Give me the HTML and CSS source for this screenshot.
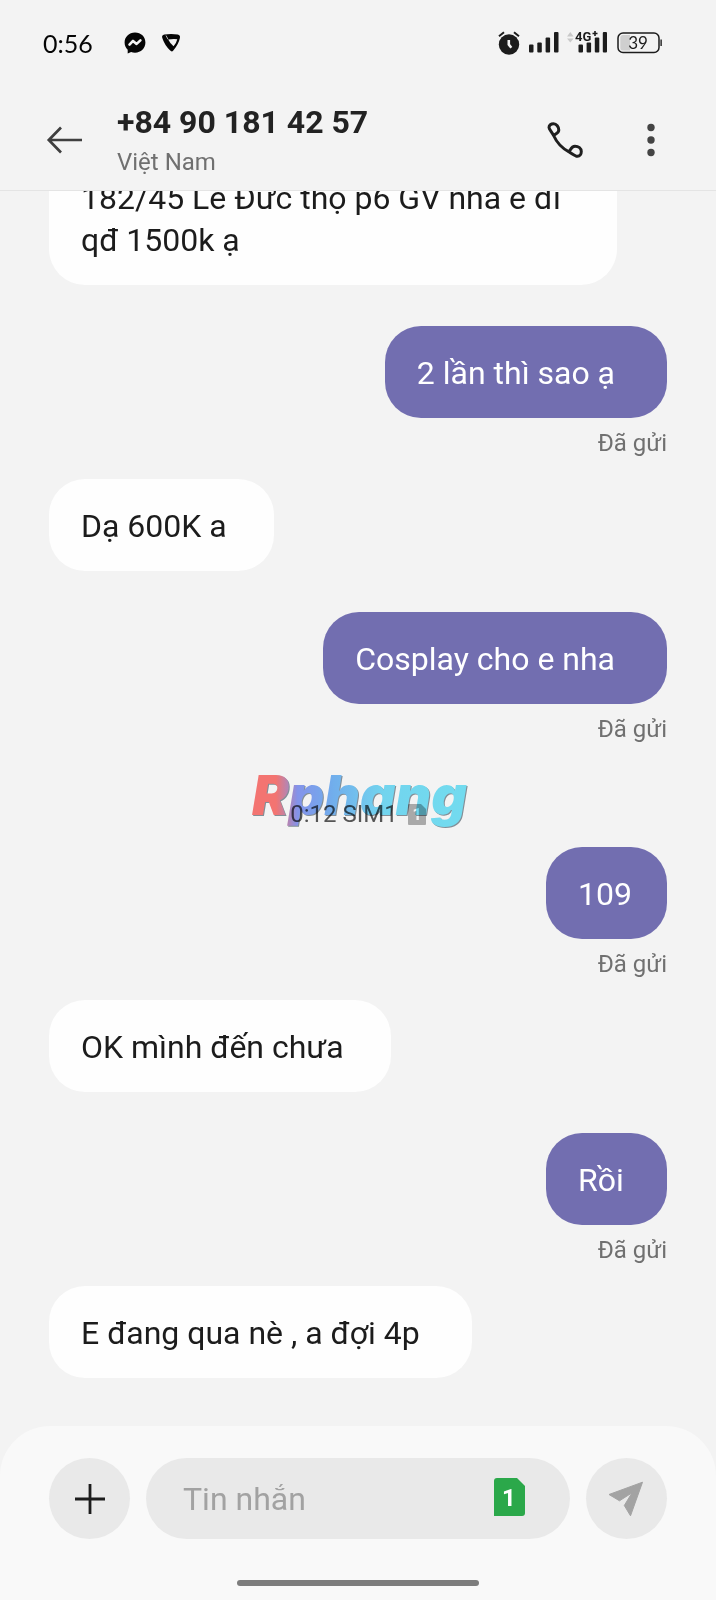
FILE: index.html
```html
<!DOCTYPE html>
<html lang="vi">
<head>
<meta charset="utf-8">
<meta name="viewport" content="width=device-width, initial-scale=1">
<title>Tin nhắn</title>
<link rel="stylesheet" href="styles.css">
</head>
<body>
<div class="phone">
  <div class="status">
    <span class="status-time">0:56</span>
    <svg class="messenger" width="22" height="22" viewBox="0 0 22 22" aria-hidden="true">
      <path fill="#050505" d="M11 .6C5 .6.6 5 .6 10.6c0 3 1.2 5.4 3.1 7.2v3.6l3.4-1.3c1.2.4 2.5.6 3.9.6 6 0 10.4-4.400 10.400-10.100S17 .6 11 .6z"/>
      <path fill="none" stroke="#f3f3f3" stroke-width="2.600" stroke-linejoin="round" stroke-linecap="round" d="M5.500 12.600l3.500-3.700 3.600 3 3.800-3.500"/>
    </svg>
    <svg class="shield" width="20" height="20" viewBox="0 0 20 20" aria-hidden="true">
      <path fill="#050505" d="M1.300 5Q.3 2 3.400 1.500 10 .4 16.700 1.500 19.600 2 18.900 5 17.500 11.500 12.300 17.500 10.800 19.200 9.200 17.600 3.500 12 1.300 5z"/>
      <path fill="#f3f3f3" d="M7.200 6.600Q12 5.800 16.300 6.300 15.400 10.300 12.500 13.200 9.200 10.700 7.200 6.600z"/>
      <path fill="none" stroke="#b5b5b5" stroke-width="1" d="M5 2.500l2 3.800"/>
    </svg>
    <svg class="alarm" width="22" height="24" viewBox="0 0 22 24" aria-hidden="true">
      <circle cx="11" cy="13.500" r="10.200" fill="#1c1c1c"/>
      <path fill="none" stroke="#1c1c1c" stroke-width="2" d="M1 5.300l5-4M21 5.300l-5-4"/>
      <path fill="none" stroke="#f3f3f3" stroke-width="2.600" d="M10.800 9v4.500l2.500 3.200"/>
    </svg>
    <svg class="signal" width="30" height="24" viewBox="0 0 30 24" aria-hidden="true">
      <g fill="#1c1c1c"><rect y="13.500" width="4.500" height="8" rx="1"/><rect x="8.300" y="11.500" width="4.500" height="10" rx="1"/><rect x="16.600" y="6.500" width="4.500" height="15" rx="1"/><rect x="25" y="1" width="4.500" height="20.500" rx="1"/></g>
    </svg>
    <svg class="network" width="40" height="24" viewBox="0 0 40 24" aria-hidden="true">
      <g fill="#c9c9c9"><path d="M0 5.500L3.300 1l3.300 4.500zM0 7.500L3.300 11.500l3.300-4z"/></g>
      <g fill="#1c1c1c"><rect x="11.500" y="13.500" width="4.500" height="8" rx="1"/><rect x="19.600" y="11.500" width="4.500" height="10" rx="1"/><rect x="27.800" y="6.500" width="4.500" height="15" rx="1"/><rect x="35.800" y="1" width="4.200" height="20.500" rx="1"/></g>
      <text class="network-label" x="8" y="10">4G</text>
      <path stroke="#1c1c1c" stroke-width="1.600" d="M25.500 2.500h5M28 0v5"/>
    </svg>
    <svg class="battery" width="46" height="22" viewBox="0 0 46 22" aria-hidden="true">
      <rect x="1" y="1" width="41" height="19.500" rx="5" fill="none" stroke="#1c1c1c" stroke-width="1.500"/>
      <path fill="#cfcfcf" d="M6 3h7v15.500H6Q3.300 18.500 3.300 16V5.500Q3.300 3 6 3z"/>
      <rect x="43.300" y="7.500" width="1.700" height="6.500" fill="#444"/>
      <text class="battery-label" x="21" y="17" text-anchor="middle">39</text>
    </svg>
  </div>

  <header class="appbar">
    <button class="icon-btn" type="button" aria-label="Quay lại">
      <svg width="36" height="28" viewBox="0 0 36 28"><path fill="none" stroke="#3f3f3f" stroke-width="2.700" d="M35 14H2M14 1.500L1.800 14 14 26.500"/></svg>
    </button>
    <div class="contact">
      <h1 class="contact-name">+84 90 181 42 57</h1>
      <p class="contact-place">Việt Nam</p>
    </div>
    <button class="icon-btn" type="button" aria-label="Gọi">
      <svg width="36" height="36" viewBox="0 0 36 36"><path fill="none" stroke="#1f1f1f" stroke-width="3" stroke-linejoin="round" d="M6.600 13.500C4.500 9.800 2 7 2 5.500 2 3.200 4 1.700 6.500 1.700 9.500 1.700 11.800 5 11.800 8c0 3-2.800 3.700-5.200 5.500C9.500 20 15.500 26.500 22 29.800 25 31.800 28.500 34.300 30.500 34.300 32.800 34.300 34.300 32 34.300 29.500 34.300 26.300 31.500 24.200 28 24.200 24.500 24.200 23.800 27.300 22 29.800"/></svg>
    </button>
    <button class="icon-btn more" type="button" aria-label="Thêm">
      <svg width="8" height="34" viewBox="0 0 8 34"><g fill="#444"><circle cx="4" cy="4.500" r="3.700"/><circle cx="4" cy="17" r="3.700"/><circle cx="4" cy="29.500" r="3.700"/></g></svg>
    </button>
  </header>

  <main class="thread">
    <p class="bubble in long">182/45 Lê Đức thọ p6 GV nhà e đi qđ 1500k ạ</p>
    <p class="bubble out spaced">2 lần thì sao ạ</p>
    <p class="sent">Đã gửi</p>
    <p class="bubble in">Dạ 600K a</p>
    <p class="bubble out spaced">Cosplay cho e nha</p>
    <p class="sent">Đã gửi</p>
    <div class="divider">
      <span>0:12 SIM1</span>
      <svg width="18" height="21" viewBox="0 0 18 21" aria-hidden="true"><path fill="#a9a9a9" d="M1 0h12l5 5v15q0 1-1 1H1q-1 0-1-1V1q0-1 1-1z"/><text class="sim-small" x="9" y="16" text-anchor="middle">1</text></svg>
      <svg class="watermark" width="220" height="60" viewBox="0 0 220 60" role="img" aria-label="Rphang">
        <defs><linearGradient id="brand" gradientUnits="userSpaceOnUse" x1="0" y1="0" x2="216" y2="0"><stop offset="0.120" stop-color="#ff6b67"/><stop offset="0.220" stop-color="#7d8ff5"/><stop offset="0.380" stop-color="#68aef8"/><stop offset="0.620" stop-color="#69dcfa"/><stop offset="1" stop-color="#69e4fb"/></linearGradient></defs>
        <text class="brand-shade" x="3" y="44">Rphang</text>
        <text class="brand" x="2" y="43" fill="url(#brand)">Rphang</text>
      </svg>
    </div>
    <p class="bubble out short">109</p>
    <p class="sent">Đã gửi</p>
    <p class="bubble in">OK mình đến chưa</p>
    <p class="bubble out short">Rồi</p>
    <p class="sent">Đã gửi</p>
    <p class="bubble in spaced">E đang qua nè , a đợi 4p</p>
  </main>

  <footer class="composer">
    <form class="compose-row">
      <button class="round-btn" type="button" aria-label="Đính kèm">
        <svg width="32" height="32" viewBox="0 0 32 32"><path stroke="#1c1c1c" stroke-width="2.800" d="M1 16h30M16 1v30"/></svg>
      </button>
      <div class="field">
        <input class="field-input" type="text" placeholder="Tin nhắn" aria-label="Tin nhắn">
        <button class="sim-btn" type="button" aria-label="SIM 1">
          <svg width="31" height="38" viewBox="0 0 31 38"><path fill="#2ba84a" d="M3 0h20l8 8v27q0 3-3 3H0V3q0-3 3-3z"/><text class="sim-label" x="15" y="28" text-anchor="middle">1</text></svg>
        </button>
      </div>
      <button class="round-btn" type="submit" aria-label="Gửi">
        <svg width="38" height="36" viewBox="0 0 38 36"><path fill="#a3a3a3" stroke="#a3a3a3" stroke-width="1" stroke-linejoin="round" d="M34.500 1.200L1 13.500l10.500 6.300L24 11.800 16.300 24.500l6.200 10.300z"/></svg>
      </button>
    </form>
    <div class="home-bar"></div>
  </footer>
</div>
</body>
</html>
```
FILE: styles.css
```css
* { box-sizing: border-box; margin: 0; padding: 0; }
body { font-family: Roboto, "Noto Sans", sans-serif; background: #f3f3f3; color: #1c1c1c; }
svg { display: block; flex: none; overflow: visible; }
button { border: 0; background: none; cursor: pointer; }

.phone { display: flex; flex-direction: column; height: 100vh; overflow: hidden; }

.status { flex: none; display: flex; align-items: center; height: 86px; padding: 0 53px 0 43px; }
.status-time { font: 25px/30px Lato, sans-serif; color: #050505; }
.messenger { margin-left: 31px; }
.shield { margin-left: 15px; }
.alarm { margin-left: auto; }
.signal { margin-left: 9px; }
.network { margin-left: 8px; }
.battery { margin-left: 10px; }
.network-label { font: 700 13px Roboto, sans-serif; fill: #1c1c1c; stroke: #f3f3f3; stroke-width: 2px; paint-order: stroke; }
.battery-label { font: 17px Lato, sans-serif; fill: #1c1c1c; }

.appbar { flex: none; display: flex; align-items: center; height: 105px; padding: 4px 61px 0 47px; border-bottom: 1px solid #e4e4e4; }
.icon-btn { flex: none; }
.contact { flex: 1; padding: 2px 0 0 34px; }
.contact-name { font-size: 32px; font-weight: 700; line-height: 42px; color: #222; }
.contact-place { font-size: 24px; line-height: 38px; color: #707070; }
.more { margin-left: 64px; }

.thread { flex: 1; min-height: 0; overflow: hidden; display: flex; flex-direction: column; justify-content: flex-end; padding: 0 49px 48px; }
.bubble { flex: none; min-width: 121px; padding: 26px 47px 24px 32px; border-radius: 36px; font-size: 32px; line-height: 42px; }
.in { align-self: flex-start; background: #fefefe; }
.out { align-self: flex-end; margin-top: 41px; background: #726eb0; color: #fff; }
.spaced { padding-right: 52px; }
.short { padding-right: 32px; }
.long { max-width: 568px; padding-right: 32px; }
.sent { flex: none; align-self: flex-end; height: 61px; padding-top: 9px; font-size: 24px; line-height: 32px; color: #707070; }
.divider { flex: none; position: relative; display: flex; align-items: center; justify-content: center; gap: 10px; padding: 34px 0 18px; font-size: 24px; line-height: 30px; color: #555; }
.divider + .bubble { margin-top: 0; }
.sim-small { font: 700 16px Roboto, sans-serif; fill: #f3f3f3; }
.watermark { position: absolute; left: 50%; top: 7px; margin-left: -108px; opacity: 0.9; mix-blend-mode: multiply; }
.brand, .brand-shade { font: italic 900 55px Inter, Roboto, sans-serif; }
.brand-shade { fill: #7c8a94; }

.composer { flex: none; padding: 32px 49px 14px; border-radius: 50px 50px 0 0; background: #f9f9f9; }
.compose-row { display: flex; gap: 16px; }
.round-btn { flex: none; display: grid; place-items: center; width: 81px; height: 81px; border-radius: 50%; background: #e9e9e9; }
.field { flex: 1; min-width: 0; display: flex; align-items: center; height: 81px; padding: 0 45px 4px 37px; border-radius: 41px; background: #e9e9e9; }
.field-input { flex: 1; min-width: 0; height: 48px; padding-top: 4px; border: 0; outline: 0; background: none; font: 32px Roboto, sans-serif; color: #1c1c1c; }
.field-input::placeholder { color: #a2a2a2; opacity: 1; }
.sim-btn { flex: none; }
.sim-label { font: 700 24px Roboto, sans-serif; fill: #fff; }
.home-bar { width: 242px; height: 6px; margin: 41px auto 0; border-radius: 3px; background: #7d7d7d; }
```
